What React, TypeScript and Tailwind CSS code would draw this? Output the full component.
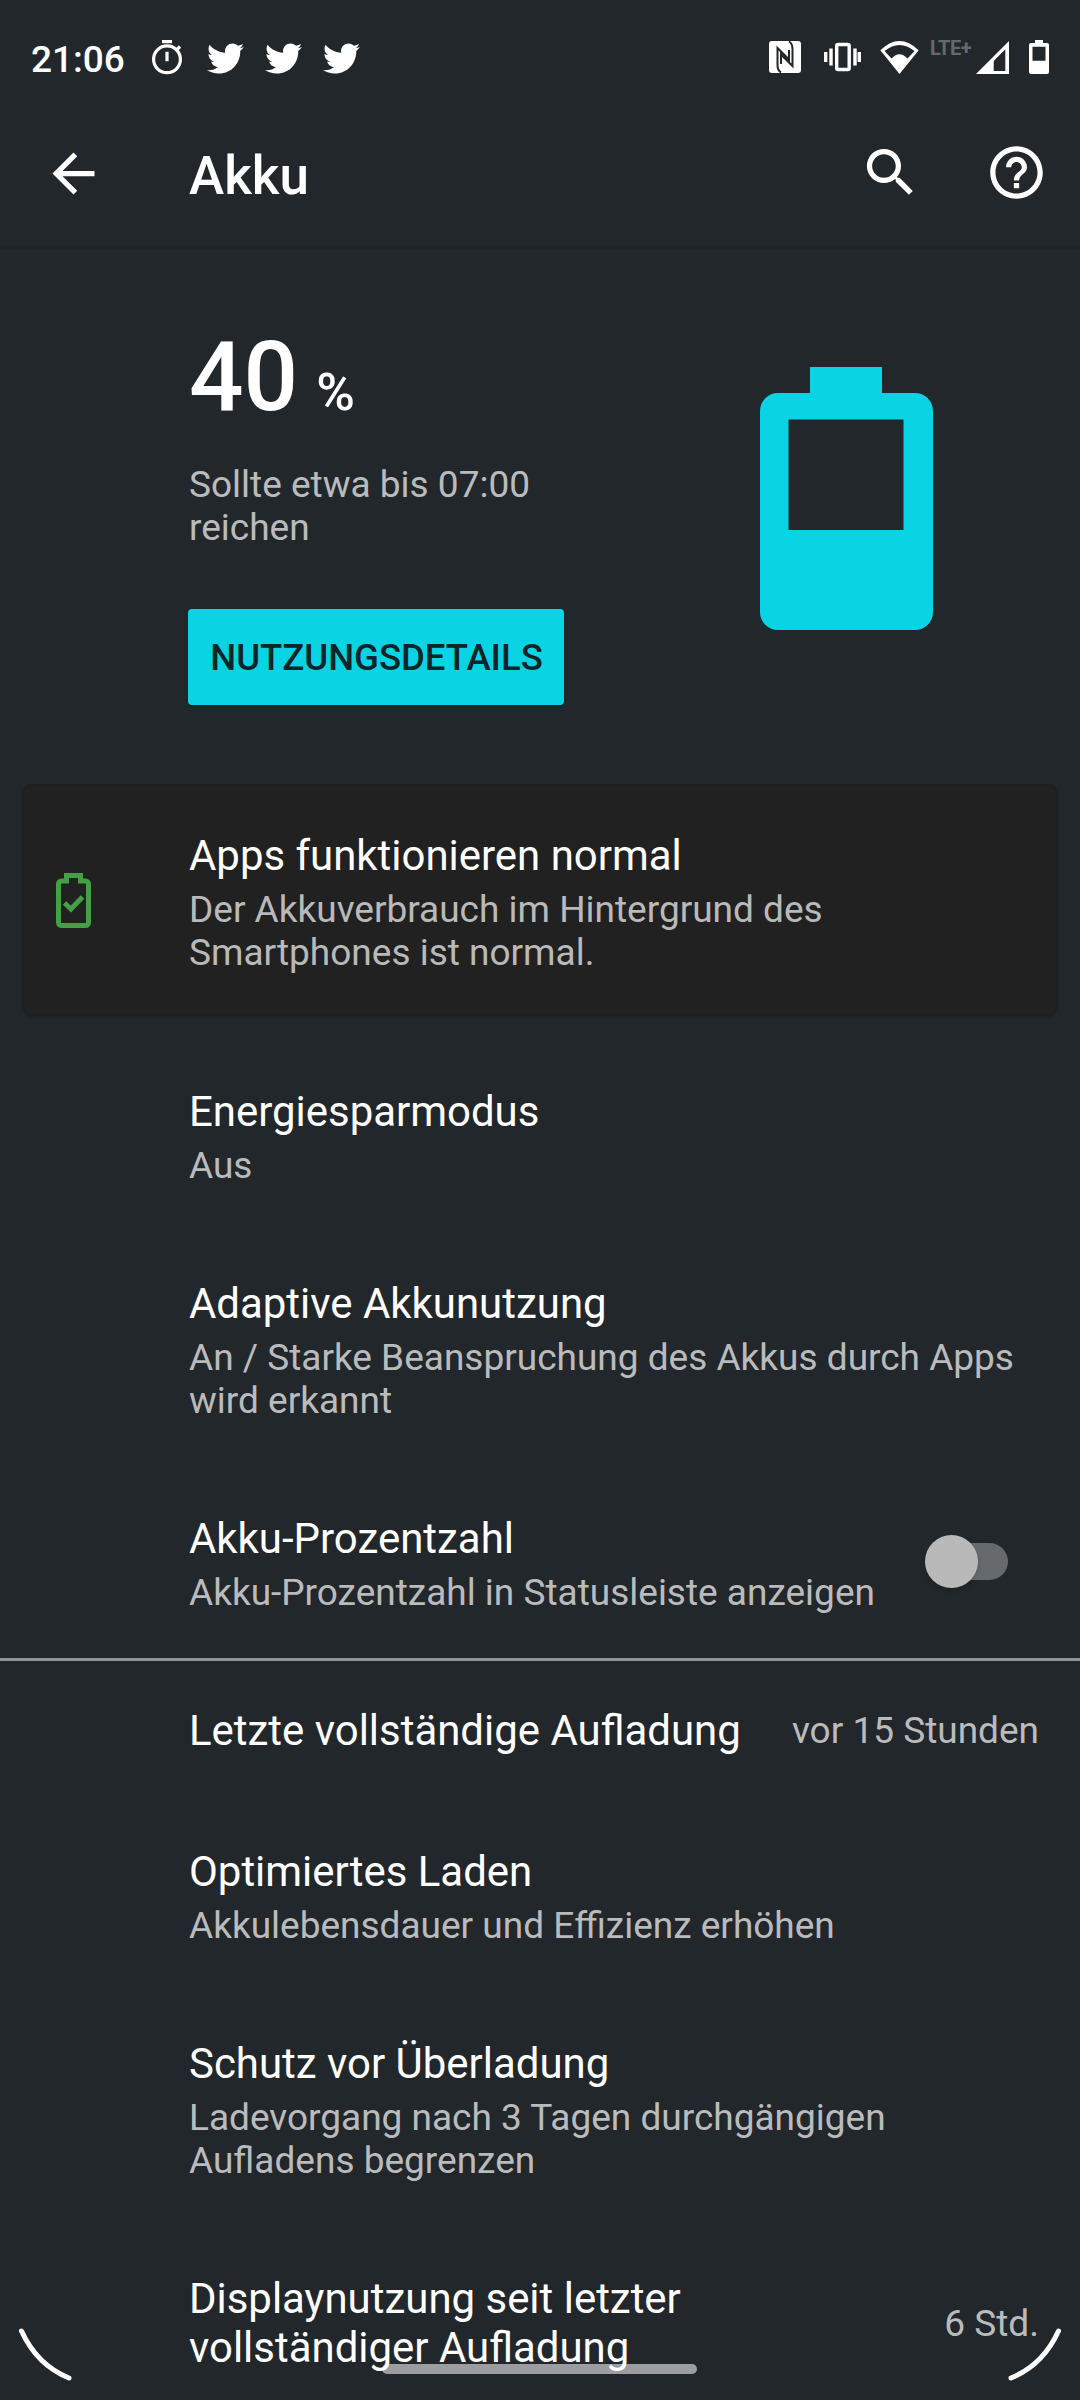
import type { ReactNode } from "react";
import { MdArrowBack, MdHelpOutline, MdSearch } from "react-icons/md";
import { FaTwitter } from "react-icons/fa";

type RowProps = {
  title: ReactNode;
  summary?: ReactNode;
  value?: string;
  className?: string;
  children?: ReactNode;
};

function StatusBar() {
  return (
    <div className="flex h-[116px] items-center pb-[2px] pl-[31px]">
      <span className="mt-[4px] w-[120px] text-[37px] font-medium leading-none">21:06</span>
      <svg className="h-[36px] w-[32px]" viewBox="0 0 32 36" fill="none" stroke="#fff" strokeWidth="3.2">
        <circle cx="16" cy="20.3" r="13.4" />
        <path d="M11 2.700h10M16 12.700v9.500M25.500 11l3.500-3.500" />
      </svg>
      <div className="ml-[24px] mt-[2px] flex gap-[21px]">
        <FaTwitter size={37} />
        <FaTwitter size={37} />
        <FaTwitter size={37} />
      </div>
      <div className="ml-auto flex items-center pr-[31px]">
        <svg className="h-[32px] w-[32px]" viewBox="0 0 32 32">
          <rect width="32" height="32" rx="3" fill="#fff" />
          <path
            d="M12 31.500C9.500 30 8.500 28 8.500 24V7L20 18.500V9M20 .5C22.500 2 23.500 4 23.500 8V25L12 13.500V23"
            fill="none"
            stroke="#22272b"
            strokeWidth="2"
          />
        </svg>
        <svg className="ml-[23px] h-[30px] w-[37px]" viewBox="0 0 37 30" fill="none" stroke="#fff" strokeWidth="3.4">
          <rect x="12.700" y="2.500" width="12.500" height="25" rx="1.500" />
          <path d="M1.700 10v10M7 6.500v17M31 6.500v17M35.300 10v10" />
        </svg>
        <svg className="ml-[19px] h-[33px] w-[39px]" viewBox="0 0 39 33">
          <path
            fillRule="evenodd"
            d="M.3 9.300Q19.500-9.300 38.700 9.300L19.500 33zM4.500 10L11.500 17.500Q19.500 9 27.500 17.500L34.500 10Q19.500-2 4.500 10z"
            fill="#fff"
          />
        </svg>
        <span className="mb-[18px] ml-[11px] w-[46px] text-[20px] font-bold leading-none tracking-[-0.5px] text-[#65696c]">
          LTE+
        </span>
        <svg className="h-[33px] w-[33px]" viewBox="0 0 33 33">
          <path fillRule="evenodd" d="M33 0V33H0zM29.300 8.300L17.700 20V30H29.300z" fill="#fff" />
        </svg>
        <svg className="ml-[20px] h-[34px] w-[20px]" viewBox="0 0 20 34">
          <path
            fillRule="evenodd"
            d="M6 0h8v3h4a2 2 0 0 1 2 2v27a2 2 0 0 1-2 2H2a2 2 0 0 1-2-2V5a2 2 0 0 1 2-2h4zM3.500 6.700v14h13v-14z"
            fill="#fff"
          />
        </svg>
      </div>
    </div>
  );
}

function AppBar() {
  return (
    <header className="flex h-[133px] items-center border-b-3 border-[#1f2428] pb-[17px] pl-[42px] pr-[32px]">
      <MdArrowBack size={63} className="mt-[2px]" />
      <h1 className="ml-[84px] pt-[7px] text-[53px] font-medium leading-none">Akku</h1>
      <MdSearch size={63} className="ml-auto" />
      <MdHelpOutline size={63} className="ml-[63px]" />
    </header>
  );
}

function Row({ title, summary, value, className = "", children }: RowProps) {
  return (
    <div className={`flex items-center pl-[189px] ${className}`}>
      <div>
        <div className="text-[41.95px] leading-[49px]">{title}</div>
        {summary && <div className="mt-[8px] text-[37px] leading-[43px] text-white/70">{summary}</div>}
      </div>
      {value && <div className="ml-auto pr-[41px] text-[37px] leading-[43px] text-white/70">{value}</div>}
      {children}
    </div>
  );
}

function Switch() {
  return (
    <div className="relative mb-[5px] ml-auto mr-[72px] h-[37px] w-[78px] rounded-full bg-[#666a6d]">
      <div className="absolute -left-[5px] -top-[8px] size-[53px] rounded-full bg-[#b9b9b9] shadow-md" />
    </div>
  );
}

export default function App() {
  return (
    <div className="relative h-[2400px] w-[1080px] overflow-hidden bg-[#22272b] font-[Roboto,sans-serif] text-white">
      <StatusBar />
      <AppBar />

      <section className="flex h-[535px] justify-between pl-[189px] pr-[147px]">
        <div className="pt-[72px]">
          <div className="flex items-baseline font-medium">
            <span className="text-[96px] leading-[112px]">40</span>
            <span className="ml-[18px] text-[52.5px] leading-none">%</span>
          </div>
          <p className="mt-[30px] text-[37px] leading-[43px] text-white/70">
            Sollte etwa bis 07:00
            <br />
            reichen
          </p>
          <button className="-ml-px mt-[60px] flex h-[96px] w-[376px] items-center justify-center rounded-[4px] bg-[#0ad3e4] pl-px pt-[3px] text-[36.5px] font-medium text-[#0b2529] shadow-sm">
            NUTZUNGSDETAILS
          </button>
        </div>
        <svg className="mt-[118px] h-[263px] w-[173px]" viewBox="0 0 173 263">
          <path
            fillRule="evenodd"
            d="M50 0h72v26h33a18 18 0 0 1 18 18v201a18 18 0 0 1-18 18H18a18 18 0 0 1-18-18V44a18 18 0 0 1 18-18h32zM28.500 52.500v110.500h115V52.500z"
            fill="#0ad3e4"
          />
        </svg>
      </section>

      <section className="mx-[22px] flex h-[232px] items-center rounded-[9px] border-2 border-[#1d2022] bg-[#212121] shadow-sm">
        <svg className="ml-[32px] h-[55px] w-[35px]" viewBox="0 0 35 55" fill="none" stroke="#43a047" strokeWidth="5">
          <path d="M10.500 8H5.500a3 3 0 0 0-3 3v38.500a3 3 0 0 0 3 3h24a3 3 0 0 0 3-3V11a3 3 0 0 0-3-3h-5V2.500h-14z" />
          <path d="M8.500 30l6.500 6 11.500-12" />
        </svg>
        <Row
          className="-ml-[91px] flex-1 pt-[5px]"
          title="Apps funktionieren normal"
          summary={
            <>
              Der Akkuverbrauch im Hintergrund des
              <br />
              Smartphones ist normal.
            </>
          }
        />
      </section>

      <main className="relative z-10">
        <Row className="mt-[25px] h-[192px]" title="Energiesparmodus" summary="Aus" />
        <Row
          className="h-[235px]"
          title="Adaptive Akkunutzung"
          summary={
            <>
              An / Starke Beanspruchung des Akkus durch Apps
              <br />
              wird erkannt
            </>
          }
        />
        <Row
          className="h-[190px] pt-[2px]"
          title="Akku-Prozentzahl"
          summary="Akku-Prozentzahl in Statusleiste anzeigen"
        >
          <Switch />
        </Row>
        <div className="h-[3px] bg-[#919598]" />
        <Row className="h-[140px] pb-[2px]" title="Letzte vollständige Aufladung" value="vor 15 Stunden" />
        <Row className="h-[192px]" title="Optimiertes Laden" summary="Akkulebensdauer und Effizienz erhöhen" />
        <Row
          className="h-[235px]"
          title="Schutz vor Überladung"
          summary={
            <>
              Ladevorgang nach 3 Tagen durchgängigen
              <br />
              Aufladens begrenzen
            </>
          }
        />
        <Row
          className="h-[190px]"
          title={
            <>
              Displaynutzung seit letzter
              <br />
              vollständiger Aufladung
            </>
          }
          value="6 Std."
        />
      </main>

      {/* gesture pill and rounded corner handles */}
      <div className="absolute left-[382px] top-[2364px] h-[10px] w-[315px] rounded-full bg-[#9c9da0]" />
      <svg
        className="absolute left-0 top-[2320px]"
        width="1080"
        height="80"
        fill="none"
        stroke="#fff"
        strokeWidth="5"
        strokeLinecap="round"
      >
        <path d="M21.500 11Q37 45 69 58" />
        <path d="M1058.500 11Q1043 45 1011 58" />
      </svg>
    </div>
  );
}
